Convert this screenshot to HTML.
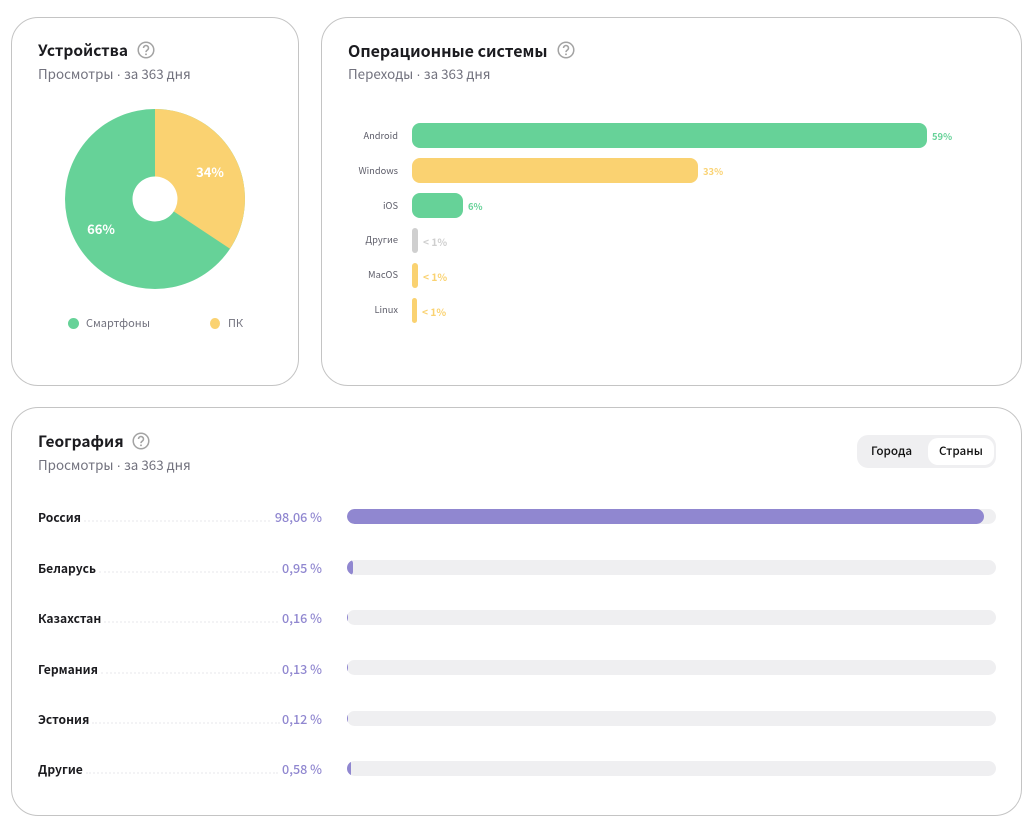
<!DOCTYPE html>
<html lang="ru"><head><meta charset="utf-8"><title>Статистика</title>
<style>
html,body{margin:0;padding:0;background:#fff}
body{width:1030px;height:823px;position:relative;overflow:hidden;font-family:"Noto Sans CJK SC","Liberation Sans",sans-serif;color:#1b1b1f}
.a{position:absolute;white-space:nowrap}
.card{position:absolute;box-sizing:border-box;border:1px solid #c4c4c4;border-radius:27px;background:#fff}
.t{font-size:16px;font-weight:700;line-height:24px;height:24px}
.s{font-size:13.4px;line-height:18px;color:#72727e}
.s b{font-family:"Liberation Sans",sans-serif;font-weight:400}
.l{font-size:11px;line-height:18px;color:#72727e}
.os{font-size:9.3px;line-height:14px;color:#5f5f6b;text-align:right;width:59px;left:339px}
.bar{position:absolute;left:412px;height:25px;border-radius:8px}
.p{font-size:9.4px;line-height:14px;font-weight:700}
.q{font-size:10.2px}
.g{background:#66d298}.y{background:#fad271}
.cg{color:#66d298}.cy{color:#fad271}.cc{color:#cfcfcf}
.c{font-size:12.1px;line-height:20px;font-weight:700;left:38px;color:#1b1b1f}
.v{font-size:12.6px;line-height:20px;font-weight:500;color:#9087d0;right:708px}
.d{position:absolute;border-top:2px dotted #f3f3f5;height:0}
.tr{position:absolute;left:347px;width:649px;height:15px;border-radius:8px;background:#efeff1;overflow:hidden}
.tr i{display:block;height:15px;background:#9087d0;border-radius:8px}
</style></head><body>
<div class="card" style="left:11px;top:17px;width:288px;height:369px"></div>
<div class="card" style="left:321px;top:17px;width:701px;height:369px"></div>
<div class="card" style="left:11px;top:407px;width:1011px;height:409px"></div>

<div class="a t" style="left:38px;top:38px;font-size:15.5px">Устройства</div>
<svg class="a" style="left:137px;top:41px" width="18" height="18" viewBox="0 0 19 19"><circle cx="9.5" cy="9.5" r="8.2" fill="none" stroke="#a3a3a3" stroke-width="1.6"/><path d="M6.9 7.4a2.6 2.6 0 1 1 4.1 2.1c-1 .7-1.5 1.2-1.5 2.2" fill="none" stroke="#a3a3a3" stroke-width="1.6"/><circle cx="9.5" cy="14" r="1" fill="#a3a3a3"/></svg>
<div class="a s" style="left:38px;top:64px">Просмотры <b>·</b> за 363 дня</div>

<svg class="a" style="left:65px;top:109px" width="180" height="180" viewBox="0 0 180 180">
<circle cx="90" cy="90" r="90" fill="#66d298"/>
<path d="M90 90V0A90 90 0 0 1 165 139.7Z" fill="#fad271"/>
<circle cx="90" cy="90" r="22.5" fill="#fff"/>
<text x="145" y="68" text-anchor="middle" font-size="13" font-weight="700" fill="#fff" font-family="Noto Sans CJK SC, Liberation Sans, sans-serif">34%</text>
<text x="36" y="125" text-anchor="middle" font-size="13" font-weight="700" fill="#fff" font-family="Noto Sans CJK SC, Liberation Sans, sans-serif">66%</text>
</svg>
<div class="a g" style="left:68px;top:318px;width:11px;height:11px;border-radius:50%"></div>
<div class="a l" style="left:86px;top:314px">Смартфоны</div>
<div class="a y" style="left:210px;top:318px;width:10px;height:11px;border-radius:50%"></div>
<div class="a l" style="left:228px;top:314px">ПК</div>

<div class="a t" style="left:348px;top:38px">Операционные системы</div>
<svg class="a" style="left:557px;top:41px" width="18" height="18" viewBox="0 0 19 19"><circle cx="9.5" cy="9.5" r="8.2" fill="none" stroke="#a3a3a3" stroke-width="1.6"/><path d="M6.9 7.4a2.6 2.6 0 1 1 4.1 2.1c-1 .7-1.5 1.2-1.5 2.2" fill="none" stroke="#a3a3a3" stroke-width="1.6"/><circle cx="9.5" cy="14" r="1" fill="#a3a3a3"/></svg>
<div class="a s" style="left:348px;top:64px">Переходы <b>·</b> за 363 дня</div>

<div class="a os" style="top:128px">Android</div><div class="bar g" style="top:123px;width:515px"></div><div class="a p cg" style="left:932px;top:129px">59%</div>
<div class="a os" style="top:163px">Windows</div><div class="bar y" style="top:158px;width:286px"></div><div class="a p cy" style="left:703px;top:164px">33%</div>
<div class="a os" style="top:198px">iOS</div><div class="bar g" style="top:193px;width:51px"></div><div class="a p cg" style="left:468px;top:199px">6%</div>
<div class="a os" style="top:232px">Другие</div><div class="bar" style="top:228px;width:6px;background:#cfcfcf;border-radius:3px"></div><div class="a p q cc" style="left:423px;top:235px">&lt; 1%</div>
<div class="a os" style="top:267px">MacOS</div><div class="bar y" style="top:263px;width:6px;border-radius:3px"></div><div class="a p q cy" style="left:423px;top:270px">&lt; 1%</div>
<div class="a os" style="top:302px">Linux</div><div class="bar y" style="top:298px;width:5px;border-radius:3px"></div><div class="a p q cy" style="left:422px;top:305px">&lt; 1%</div>

<div class="a t" style="left:38px;top:429px;font-size:15.5px">География</div>
<svg class="a" style="left:132px;top:432px" width="18" height="18" viewBox="0 0 19 19"><circle cx="9.5" cy="9.5" r="8.2" fill="none" stroke="#a3a3a3" stroke-width="1.6"/><path d="M6.9 7.4a2.6 2.6 0 1 1 4.1 2.1c-1 .7-1.5 1.2-1.5 2.2" fill="none" stroke="#a3a3a3" stroke-width="1.6"/><circle cx="9.5" cy="14" r="1" fill="#a3a3a3"/></svg>
<div class="a s" style="left:38px;top:455px">Просмотры <b>·</b> за 363 дня</div>

<div class="a" style="left:857px;top:435px;width:139px;height:33px;border-radius:11px;background:#efeff1"></div>
<div class="a" style="left:928px;top:438px;width:66px;height:27px;border-radius:10px;background:#fff"></div>
<div class="a" style="left:871px;top:442px;font-size:11.7px;line-height:18px;font-weight:500;color:#111">Города</div>
<div class="a" style="left:939px;top:442px;font-size:11.7px;line-height:18px;font-weight:500;color:#111">Страны</div>

<div class="a c" style="top:508px">Россия</div><div class="d" style="left:84px;width:186px;top:520px"></div><div class="a v" style="top:507px">98,06 %</div><div class="tr" style="top:509px"><i style="width:637px"></i></div>
<div class="a c" style="top:559px">Беларусь</div><div class="d" style="left:99px;width:179px;top:571px"></div><div class="a v" style="top:558px">0,95 %</div><div class="tr" style="top:560px"><i style="width:6px"></i></div>
<div class="a c" style="top:609px">Казахстан</div><div class="d" style="left:104px;width:174px;top:621px"></div><div class="a v" style="top:608px">0,16 %</div><div class="tr" style="top:610px"><i style="width:1px"></i></div>
<div class="a c" style="top:660px">Германия</div><div class="d" style="left:101px;width:179px;top:672px"></div><div class="a v" style="top:659px">0,13 %</div><div class="tr" style="top:660px"><i style="width:1px"></i></div>
<div class="a c" style="top:710px">Эстония</div><div class="d" style="left:92px;width:188px;top:722px"></div><div class="a v" style="top:709px">0,12 %</div><div class="tr" style="top:711px"><i style="width:1px"></i></div>
<div class="a c" style="top:760px">Другие</div><div class="d" style="left:86px;width:192px;top:772px"></div><div class="a v" style="top:759px">0,58 %</div><div class="tr" style="top:761px"><i style="width:4px"></i></div>
</body></html>
